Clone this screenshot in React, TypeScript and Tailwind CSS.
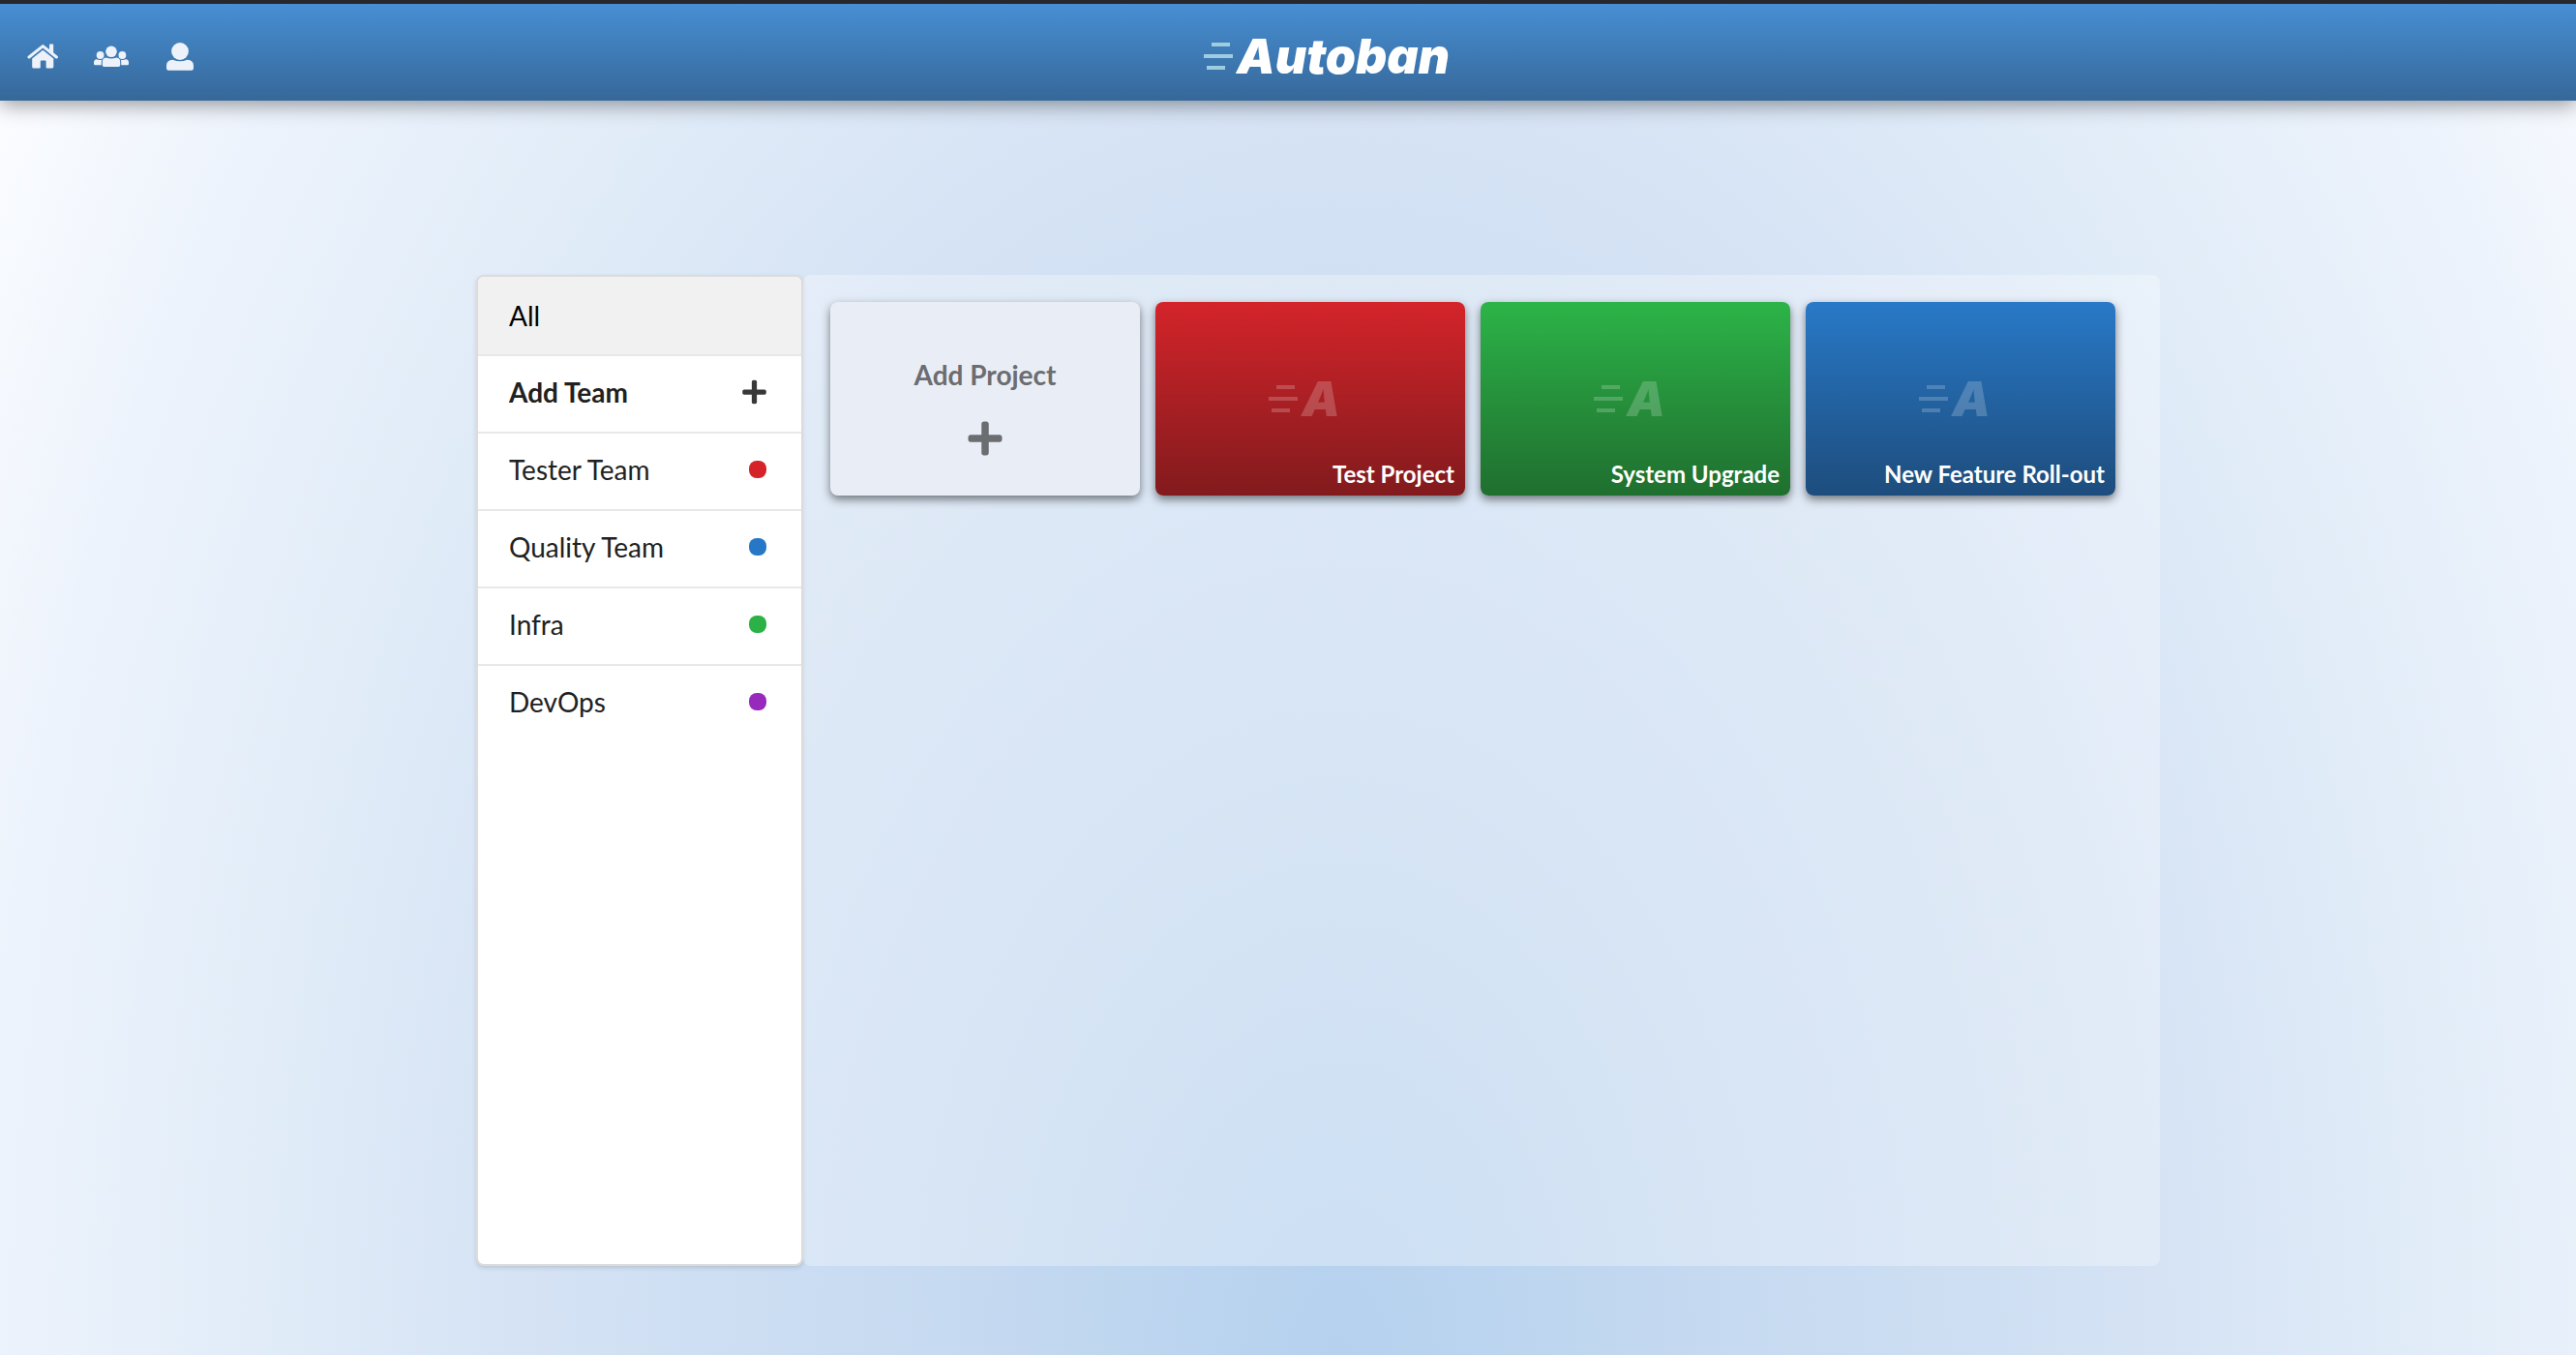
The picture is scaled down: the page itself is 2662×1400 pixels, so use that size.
import { FaPlus } from "react-icons/fa";

const teams = [
  { name: "Tester Team", dot: "bg-[#d4242a]" },
  { name: "Quality Team", dot: "bg-[#2678c6]" },
  { name: "Infra", dot: "bg-[#2bb146]" },
  { name: "DevOps", dot: "bg-[#972abc]" },
];

const projects = [
  { name: "Test Project", fill: "from-[#d4242a] to-[#821a1d]" },
  { name: "System Upgrade", fill: "from-[#2cb448] to-[#1f6f2f]" },
  { name: "New Feature Roll-out", fill: "from-[#2879c8] to-[#1d4d7d]" },
];

function SpeedLines({ className }: { className: string }) {
  return (
    <svg viewBox="0 0 30 28" className={className} fill="currentColor" aria-hidden="true">
      <path d="M8 0h19v4H8zM0 12h30v4H0zM3 24h19v4H3z" />
    </svg>
  );
}

function HomeIcon() {
  return (
    <svg viewBox="0 0 32 26" className="h-[26px] w-8" fill="currentColor" aria-hidden="true">
      <path d="M2 14 16.3 2.6 30.4 14" fill="none" stroke="currentColor" strokeWidth="3" strokeLinecap="round" strokeLinejoin="round" />
      <path d="M23 1.4q0-.9.9-.9h2.4q.9 0 .9.9V12L23 8.5z" />
      <path d="M5.2 15.6 16.3 6.8l11 8.8v8.5q0 1.3-1.3 1.3h-5.4q-1 0-1-1v-5.9q0-.9-.9-.9h-4q-.9 0-.9.9v5.9q0 1-1 1H6.5q-1.3 0-1.3-1.3z" />
    </svg>
  );
}

function TeamsIcon() {
  return (
    <svg viewBox="0 0 36 22" className="h-[22px] w-9" fill="currentColor" aria-hidden="true">
      <circle cx="18" cy="6.3" r="5.8" />
      <circle cx="6.6" cy="10" r="3.9" />
      <circle cx="29.4" cy="10" r="3.9" />
      <path d="M12.5 12.6q5.5 1.8 11 0 3.7.5 3.7 4.4v3.2q0 1.8-1.8 1.8H10.6q-1.8 0-1.8-1.8V17q0-3.9 3.7-4.4z" />
      <path d="M3 14.3q3.2 1.3 5.4.2-.6 1.2-.6 2.6v3.2H1.3q-1.3 0-1.3-1.3v-1.5q0-2.800 3-3.200zM33 14.300q-3.200 1.300-5.400.2.6 1.200.6 2.600v3.200h6.500q1.300 0 1.300-1.300v-1.500q0-2.800-3-3.200z" />
    </svg>
  );
}

function ProfileIcon() {
  return (
    <svg viewBox="0 0 28 29" className="h-[29px] w-7" fill="currentColor" aria-hidden="true">
      <ellipse cx="14" cy="9" rx="8.900" ry="9" />
      <path d="M6.500 17.800q7.500 3 15 0 6.500.3 6.500 6.200v2.500q0 2.300-2.300 2.300H2.300Q0 28.800 0 26.500V24q0-5.900 6.500-6.200z" />
    </svg>
  );
}

export default function App() {
  return (
    <div className="flex min-h-screen flex-col bg-[radial-gradient(62%_178%_at_52%_100%,#b5d1ee_0%,#c3d8f0_20%,#d4e2f4_50%,#e1ecf8_68%,#edf3fc_85%,#fcfdff_100%)] font-[Lato,sans-serif] text-[28px] leading-8 text-[#212121]">
      <header className="relative grid h-[104px] grid-cols-[1fr_auto_1fr] items-center border-t-4 border-[#28272d] bg-linear-to-b from-[#478fd4] to-[#366899] px-[26px] pt-2 text-[#ecf1fa] shadow-[0_4px_20px_rgba(0,0,0,0.4)]">
        <nav className="flex items-center gap-[35px]">
          <a href="#home" aria-label="Home" className="flex w-9 justify-center"><HomeIcon /></a>
          <a href="#teams" aria-label="Teams" className="flex w-9 justify-center"><TeamsIcon /></a>
          <a href="#profile" aria-label="Profile" className="flex w-9 justify-center"><ProfileIcon /></a>
        </nav>
        <a href="#home" className="flex items-center gap-1 pl-20 text-white">
          <SpeedLines className="h-7 w-[30px] text-[#9fcde0]" />
          <span className="font-[Inter,sans-serif] text-[50px] leading-[60px] font-black italic">Autoban</span>
        </a>
      </header>
      <main className="flex flex-1 pt-[180px] pr-[430px] pb-[92px] pl-[492px]">
        <aside className="w-[338px] shrink-0 overflow-hidden rounded-lg border-2 border-[#dcdcdc] bg-white shadow-[0_2px_4px_rgba(34,36,38,0.15)]">
          <ul className="divide-y-2 divide-[#e8e8e8]">
            <li><button className="flex h-20 w-full items-center bg-[#f1f1f1] px-8 text-black">All</button></li>
            <li>
              <button className="flex h-[78px] w-full items-center justify-between pr-9 pb-1 pl-8 font-bold">
                Add Team <FaPlus className="h-7 w-[25px] text-[#383838]" />
              </button>
            </li>
            {teams.map((t) => (
              <li key={t.name}>
                <button className="flex h-[78px] w-full items-center justify-between pr-9 pb-1 pl-8">
                  {t.name} <span className={`size-[18px] rounded-lg ${t.dot}`} />
                </button>
              </li>
            ))}
          </ul>
        </aside>
        <section className="flex flex-1 flex-wrap content-start gap-4 rounded-lg bg-white/30 p-7">
          <button className="flex h-[200px] w-80 flex-col items-center justify-center gap-[30px] rounded-lg bg-[#e9eef6] pt-5 font-bold text-[#6c6d70] shadow-[0_4px_10px_rgba(0,0,0,0.5)]">
            Add Project <FaPlus className="size-10" />
          </button>
          {projects.map((p) => (
            <button key={p.name} className={`relative flex h-[200px] w-80 items-end justify-end rounded-lg bg-linear-to-b px-[11px] pb-2 text-[24px] leading-7 font-bold text-white shadow-[0_4px_10px_rgba(0,0,0,0.5)] ${p.fill}`}>
              <span aria-hidden="true" className="absolute inset-0 flex items-center justify-center gap-1 pr-3 text-white/20">
                <SpeedLines className="h-7 w-[30px]" />
                <span className="font-[Inter,sans-serif] text-[50px] leading-[60px] font-black italic">A</span>
              </span>
              {p.name}
            </button>
          ))}
        </section>
      </main>
    </div>
  );
}
